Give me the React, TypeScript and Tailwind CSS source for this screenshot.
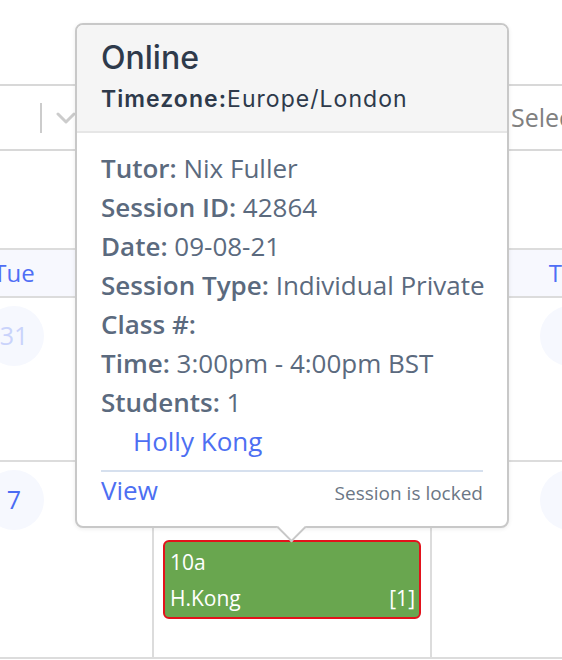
const sessionRows: { label: string; value: string }[] = [
  { label: 'Tutor:', value: 'Nix Fuller' },
  { label: 'Session ID:', value: '42864' },
  { label: 'Date:', value: '09-08-21' },
  { label: 'Session Type:', value: 'Individual Private' },
  { label: 'Class #:', value: '' },
  { label: 'Time:', value: '3:00pm - 4:00pm BST' },
  { label: 'Students:', value: '1' },
];

function Toolbar() {
  return (
    <div className="flex h-[67px] items-center border-y-2 border-[#d8d8d8]">
      <div className="flex w-[511px] shrink-0 items-center">
        <div className="w-[40px]" />
        <div className="h-[30px] w-[2px] bg-[#cccccc]" />
        <svg className="ml-[14px]" width="20" height="12" viewBox="0 0 20 12" fill="none">
          <path d="M2 2l8 8 8-8" stroke="#cccccc" strokeWidth="3" strokeLinecap="round" strokeLinejoin="round" />
        </svg>
      </div>
      <span className="whitespace-nowrap text-[25px] text-[#808080]">Select...</span>
    </div>
  );
}

function DayCircle({ day, faded }: { day?: string; faded?: boolean }) {
  return (
    <div
      className={`mx-auto flex h-[60px] w-[60px] items-center justify-center rounded-full bg-[#f6f8fe] text-[25px] ${
        faded ? 'text-[#c9d3fb]' : 'text-[#4a6cf3]'
      }`}
    >
      {day}
    </div>
  );
}

function EventBlock() {
  return (
    <div className="mx-[9px] mt-[10px] h-[79px] rounded-[6px] border-2 border-[#e3121b] bg-[#69a64f] pl-[5px] pr-[4px] pt-[2px] text-[21px] leading-[36px] text-white">
      <div>10a</div>
      <div className="flex justify-between">
        <span>H.Kong</span>
        <span>[1]</span>
      </div>
    </div>
  );
}

// middle column sits under the popover, so its labels are left out
function CalendarGrid() {
  const days = ['Tue', '', 'Thu'];
  return (
    <div className="ml-[-124px] w-[834px]">
      <div className="grid h-[50px] grid-cols-[278px_278px_278px] border-y-2 border-[#dcdcdc] bg-[#f7f8fe]">
        {days.map((d, i) => (
          <div key={i} className="flex items-center justify-center border-r-2 border-[#dcdcdc] text-[24px] text-[#4f6ef5]">
            {d}
          </div>
        ))}
      </div>
      <div className="grid h-[164px] grid-cols-[278px_278px_278px] border-b-2 border-[#dcdcdc]">
        <div className="border-r-2 border-[#dcdcdc] pt-[8px]">
          <DayCircle day="31" faded />
        </div>
        <div className="border-r-2 border-[#dcdcdc] pt-[8px]">
          <DayCircle />
        </div>
        <div className="border-r-2 border-[#dcdcdc] pt-[8px]">
          <DayCircle />
        </div>
      </div>
      <div className="grid h-[197px] grid-cols-[278px_278px_278px] border-b-2 border-[#dcdcdc]">
        <div className="border-r-2 border-[#dcdcdc] pt-[8px]">
          <DayCircle day="7" />
        </div>
        <div className="border-r-2 border-[#dcdcdc] pt-[8px]">
          <DayCircle />
          <EventBlock />
        </div>
        <div className="border-r-2 border-[#dcdcdc] pt-[8px]">
          <DayCircle />
        </div>
      </div>
    </div>
  );
}

function SessionPopover() {
  return (
    <div className="absolute left-[75px] top-[23px] h-[505px] w-[434px] rounded-[8px] border-2 border-[#c8c8c8] bg-white shadow-[0_1px_4px_rgba(0,0,0,0.08)]">
      <div className="h-[108px] rounded-t-[6px] border-b-2 border-[#e6e6e6] bg-[#f5f5f5] px-[24px] pt-[13px] font-['Inter',sans-serif] text-[#2e3a4b]">
        <div className="text-[32px] font-medium leading-[40px]">Online</div>
        <div className="mt-[6px] text-[23px] leading-[30px] tracking-[0.045em]">
          <span className="font-semibold">Timezone:</span>
          <span>Europe/London</span>
        </div>
      </div>
      <div className="px-[24px] pt-[16px] text-[26px] leading-[39px] text-[#5b6a7e]">
        {sessionRows.map((r) => (
          <div key={r.label} className="whitespace-nowrap">
            <span className="font-semibold">{r.label}</span>
            {r.value ? ` ${r.value}` : ''}
          </div>
        ))}
        <div className="pl-[32px] text-[#4d6ff2]">Holly Kong</div>
        <div className="mt-[9px] h-[2px] bg-[#d6e0ee]" />
        <div className="mt-[3px] flex items-baseline justify-between leading-[30px]">
          <span className="text-[#4d6ff2]">View</span>
          <span className="text-[19px] text-[#6b7685]">Session is locked</span>
        </div>
      </div>
      <div className="absolute bottom-[-12px] left-[204px] h-[21px] w-[21px] rotate-45 border-b-2 border-r-2 border-[#c8c8c8] bg-white" />
    </div>
  );
}

export default function App() {
  return (
    <div className="relative h-[660px] w-[562px] overflow-hidden bg-white font-['Open_Sans',sans-serif]">
      <div className="h-[84px]" />
      <Toolbar />
      <div className="h-[97px]" />
      <CalendarGrid />
      <SessionPopover />
    </div>
  );
}
